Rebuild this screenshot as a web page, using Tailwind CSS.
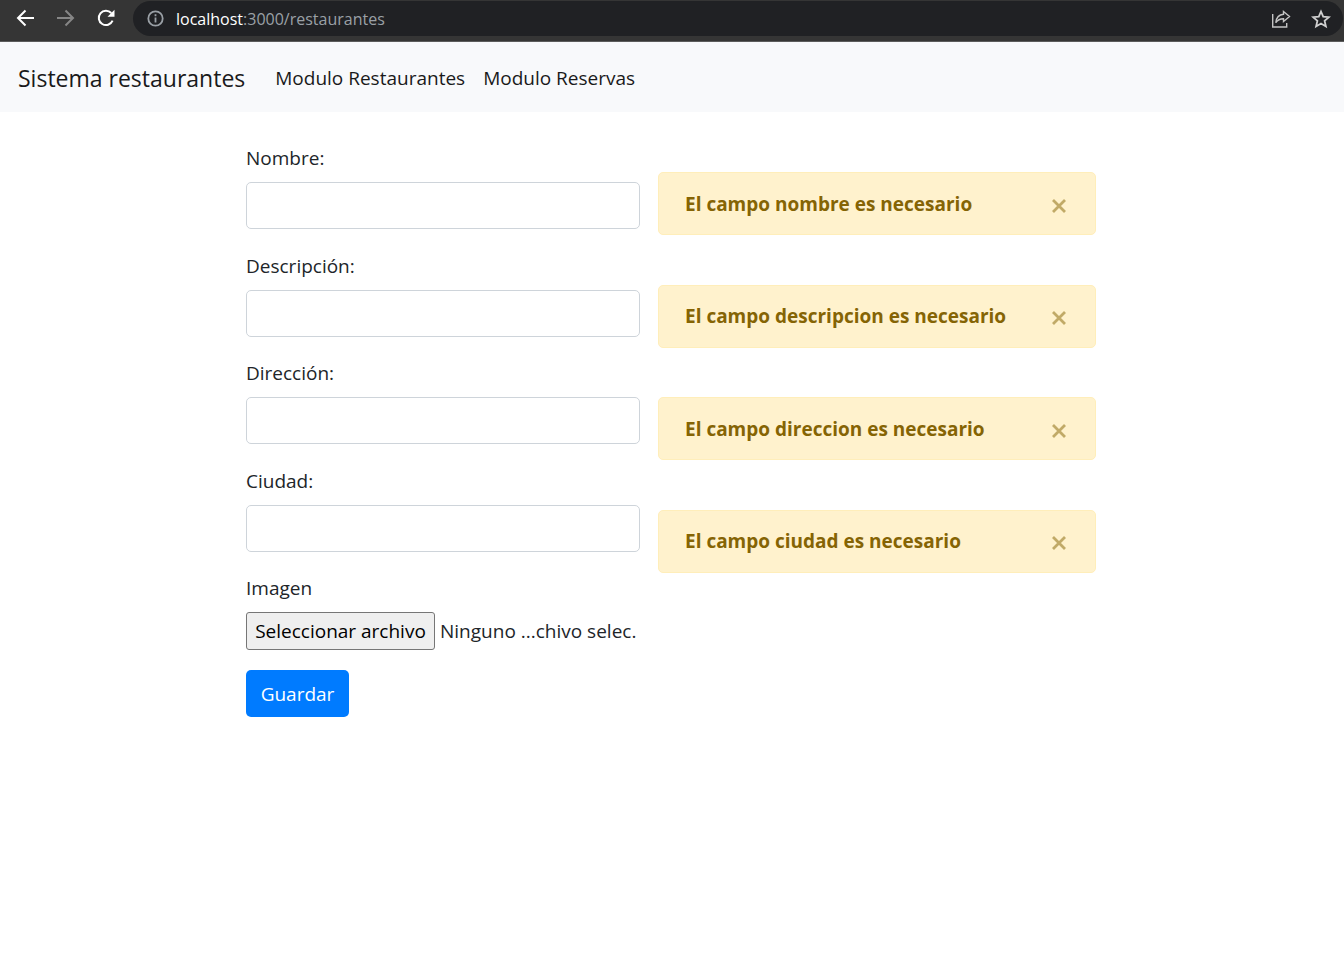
<!DOCTYPE html>
<html lang="es">
<head>
<meta charset="utf-8">
<meta name="viewport" content="width=device-width, initial-scale=1">
<title>Sistema restaurantes</title>
<script src="https://cdn.jsdelivr.net/npm/@tailwindcss/browser@4"></script>
</head>
<body class="min-h-screen bg-white font-['Segoe_UI','Open_Sans',sans-serif] text-[19px] leading-[30px] text-[#212529]">
  <header class="flex h-[42px] items-start border-b border-[#5c5c5c] bg-[#353535]">
    <div class="flex h-9 w-[133px] shrink-0 items-center gap-5 pl-[15px]">
      <button type="button" aria-label="Atrás" class="text-white">
        <svg class="size-5" viewBox="0 0 20 20" fill="none" stroke="currentColor" stroke-width="2"><path d="M19 10H3M10.500 2.500L3 10l7.500 7.500"/></svg>
      </button>
      <button type="button" aria-label="Adelante" class="text-[#868686]">
        <svg class="size-5" viewBox="0 0 20 20" fill="none" stroke="currentColor" stroke-width="2"><path d="M2 10h16M10.500 2.500L18 10l-7.500 7.500"/></svg>
      </button>
      <button type="button" aria-label="Recargar" class="text-white">
        <svg class="size-5" viewBox="0 0 20 20"><path d="M17.600 12.700A7.200 7.200 0 1 1 16.300 5" fill="none" stroke="currentColor" stroke-width="2"/><path d="M19.500 1.800v7h-7z" fill="currentColor"/></svg>
      </button>
    </div>
    <div class="mt-px mr-px flex h-[35px] min-w-0 flex-1 items-center rounded-full bg-[#202124] pr-3 pl-3.5">
      <svg class="size-[17px] shrink-0 text-[#9aa0a6]" viewBox="0 0 17 17" fill="none" stroke="currentColor" stroke-width="1.800"><circle cx="8.500" cy="8.500" r="7.200"/><path d="M8.500 7.500v5M8.500 4.300v1.900"/></svg>
      <p class="ml-3 flex-1 truncate text-base leading-[30px] text-[#9aa0a6]"><span class="text-white">localhost</span>:3000/restaurantes</p>
      <button type="button" aria-label="Compartir" class="text-[#c4c4c4]">
        <svg class="size-5" viewBox="0 0 20 20" fill="none" stroke="currentColor" stroke-width="1.400"><path d="M1.700 5v13h14v-4"/><path d="M12.500 2.500L18.500 7.500l-6 5V9.700C8.500 9.700 6.500 11 4.800 13.700 5.300 9 8 5.600 12.500 5.300z"/></svg>
      </button>
      <button type="button" aria-label="Añadir a marcadores" class="ml-5 text-[#d0d0d0]">
        <svg class="size-5" viewBox="0 0 20 20" fill="none" stroke="currentColor" stroke-width="1.800"><path d="M10 2.500l2.200 5.200 5.700.500-4.300 3.700 1.300 5.500-4.900-2.900-4.900 2.900 1.300-5.500L2.100 8.200l5.700-.500z"/></svg>
      </button>
    </div>
  </header>

  <nav class="flex h-[70px] items-center bg-[#f8f9fb] px-[18px] pt-px text-[#1a1a1a]">
    <a href="#" class="mr-[30px] text-[23px]">Sistema restaurantes</a>
    <a href="#" class="mr-[18px]">Modulo Restaurantes</a>
    <a href="#">Modulo Reservas</a>
  </nav>

  <main class="mx-auto grid max-w-[852px] grid-cols-[394fr_438fr] items-start gap-x-[18px] pt-[31px] pr-0.5">
    <form>
      <div class="grid min-h-[430px] auto-rows-fr">
        <div class="flex flex-col gap-[9px]">
          <label for="nombre">Nombre:</label>
          <input id="nombre" type="text" class="h-[47px] rounded-[5px] border border-[#ced4da] bg-white px-4">
        </div>
        <div class="flex flex-col gap-[9px]">
          <label for="descripcion">Descripción:</label>
          <input id="descripcion" type="text" class="h-[47px] rounded-[5px] border border-[#ced4da] bg-white px-4">
        </div>
        <div class="flex flex-col gap-[9px]">
          <label for="direccion">Dirección:</label>
          <input id="direccion" type="text" class="h-[47px] rounded-[5px] border border-[#ced4da] bg-white px-4">
        </div>
        <div class="flex flex-col gap-[9px]">
          <label for="ciudad">Ciudad:</label>
          <input id="ciudad" type="text" class="h-[47px] rounded-[5px] border border-[#ced4da] bg-white px-4">
        </div>
      </div>
      <label for="imagen">Imagen</label>
      <div class="relative mt-[9px] flex items-center gap-[5px]">
        <input id="imagen" type="file" class="peer sr-only">
        <label for="imagen" class="flex h-[38px] w-[189px] shrink-0 items-center justify-center rounded-[3px] border border-[#767676] bg-[#efefef] whitespace-nowrap text-black peer-focus-visible:outline-2">Seleccionar archivo</label>
        <span class="whitespace-nowrap">Ninguno ...chivo selec.</span>
      </div>
      <button type="submit" class="mt-5 h-[47px] w-[103px] rounded-[5px] bg-[#007bff] text-white">Guardar</button>
    </form>

    <div class="mt-[29px] grid min-h-[450px] auto-rows-fr items-start">
      <div role="alert" class="flex h-[63px] items-center justify-between rounded-[5px] border border-[#ffeeba] bg-[#fff2cd] pr-7 pl-[26px] text-[#856404]">
        <strong>El campo nombre es necesario</strong>
        <button type="button" aria-label="Cerrar" class="mt-1 opacity-50"><svg class="size-4" viewBox="0 0 16 16" stroke="currentColor" stroke-width="2.800"><path d="M2 2l12 12M14 2L2 14"/></svg></button>
      </div>
      <div role="alert" class="flex h-[63px] items-center justify-between rounded-[5px] border border-[#ffeeba] bg-[#fff2cd] pr-7 pl-[26px] text-[#856404]">
        <strong>El campo descripcion es necesario</strong>
        <button type="button" aria-label="Cerrar" class="mt-1 opacity-50"><svg class="size-4" viewBox="0 0 16 16" stroke="currentColor" stroke-width="2.800"><path d="M2 2l12 12M14 2L2 14"/></svg></button>
      </div>
      <div role="alert" class="flex h-[63px] items-center justify-between rounded-[5px] border border-[#ffeeba] bg-[#fff2cd] pr-7 pl-[26px] text-[#856404]">
        <strong>El campo direccion es necesario</strong>
        <button type="button" aria-label="Cerrar" class="mt-1 opacity-50"><svg class="size-4" viewBox="0 0 16 16" stroke="currentColor" stroke-width="2.800"><path d="M2 2l12 12M14 2L2 14"/></svg></button>
      </div>
      <div role="alert" class="flex h-[63px] items-center justify-between rounded-[5px] border border-[#ffeeba] bg-[#fff2cd] pr-7 pl-[26px] text-[#856404]">
        <strong>El campo ciudad es necesario</strong>
        <button type="button" aria-label="Cerrar" class="mt-1 opacity-50"><svg class="size-4" viewBox="0 0 16 16" stroke="currentColor" stroke-width="2.800"><path d="M2 2l12 12M14 2L2 14"/></svg></button>
      </div>
    </div>
  </main>
</body>
</html>
